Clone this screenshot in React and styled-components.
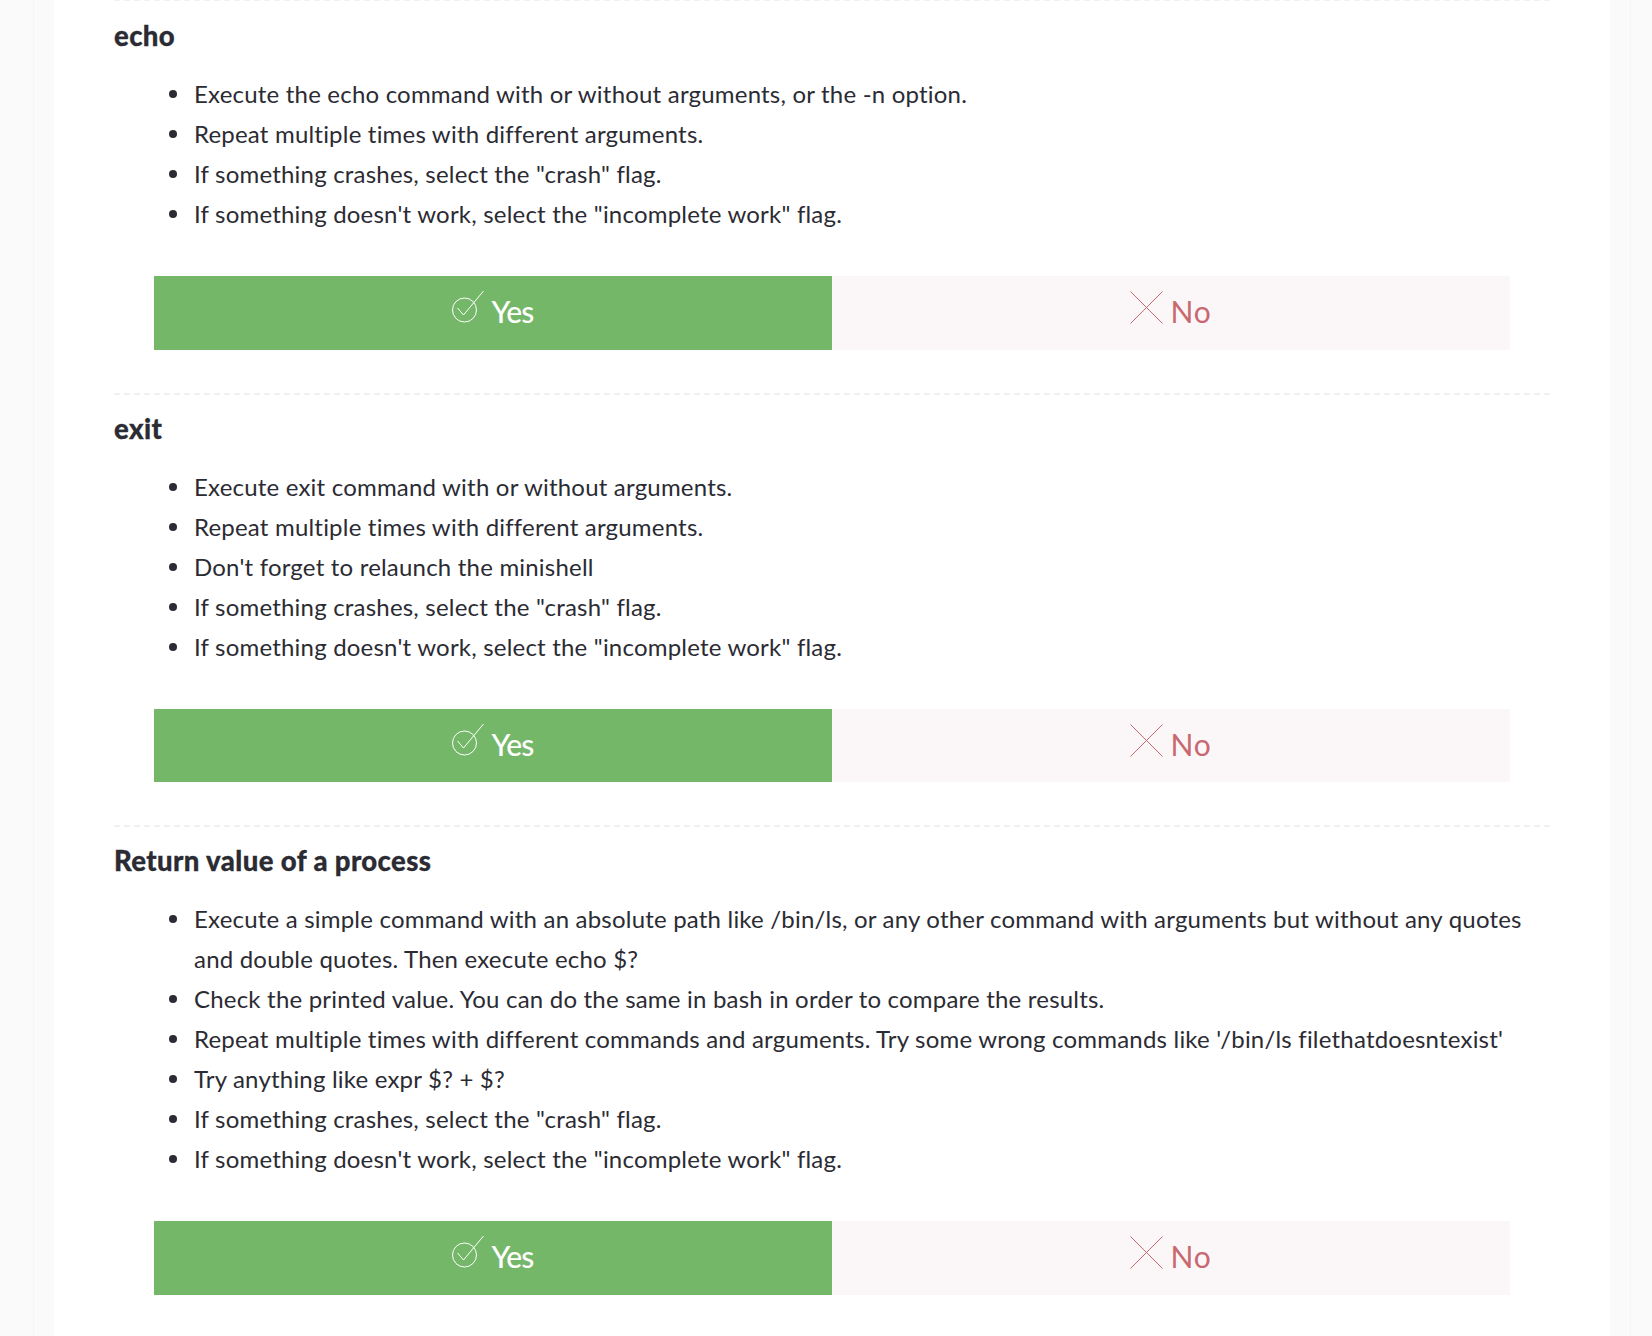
import React from "react";
import styled, { createGlobalStyle } from "styled-components";

const Global = createGlobalStyle`
  html, body { margin: 0; padding: 0; background: #fafafa; height: 1336px; overflow: hidden; }
  body { font-family: "Lato", "Liberation Sans", sans-serif; color: #2b2b33; }
`;

const Shell = styled.div`
  width: 1598px;
  margin-left: 33px;
  border-left: 1px solid #f5f5f5;
  border-right: 1px solid #f5f5f5;
  box-sizing: border-box;
  height: 1336px;
  padding: 0 20px;
`;

const Sheet = styled.main`
  background: #fff;
  padding: 0 60px;
  height: 1336px;
  display: flow-root;
  overflow: hidden;
`;

const Section = styled.section`
  border-top: 2px dashed #f1f1f1;
  padding-bottom: 43px;
  &:first-child { margin-top: -1px; padding-top: 1px; }
`;

const Title = styled.h2`
  margin: 0;
  height: 72px;
  box-sizing: border-box;
  padding-top: 17px;
  font-size: 27.5px;
  line-height: 34px;
  font-weight: 900;
  letter-spacing: 0.4px;
  -webkit-text-stroke: 0.3px #2b2b33;
`;

const Items = styled.ul`
  margin: 0 0 42px;
  padding: 0 0 0 40px;
  list-style: none;
`;

const Item = styled.li`
  display: grid;
  grid-template-columns: 40px 1fr;
  font-size: 24px;
  line-height: 40px;
  letter-spacing: 0.2px;
  &::before {
    content: "";
    width: 8px;
    height: 8px;
    margin: 16px 0 0 15px;
    border-radius: 50%;
    background: #2b2b33;
  }
`;

const Choice = styled.div`
  display: grid;
  grid-template-columns: 1fr 1fr;
  margin: 0 40px;
  height: 73.5px;
`;

const Btn = styled.div`
  display: flex;
  align-items: flex-start;
  justify-content: center;
  background: ${(p) => (p.$yes ? "#75b768" : "#fbf7f9")};
  color: ${(p) => (p.$yes ? "#fff" : "#c9686f")};
  font-size: 30px;
  font-weight: ${(p) => (p.$yes ? 500 : 400)};
  letter-spacing: ${(p) => (p.$yes ? "-0.8px" : "0.8px")};
  line-height: 40px;
  gap: 7px;
  padding-top: 15px;
`;

const Glyph = styled.svg`
  fill: none;
  stroke: currentColor;
  stroke-width: 1;
  display: block;
`;

const CheckIcon = () => (
  <Glyph width="32" height="33" viewBox="0 0 32 33">
    <circle cx="12.5" cy="19" r="12" />
    <path d="M5.5 17l6 7L31.5 0" />
  </Glyph>
);

const CrossIcon = () => (
  <Glyph width="33" height="33" viewBox="0 0 33 33">
    <path d="M0.5 0.5l32 32M32.5 0.5l-32 32" />
  </Glyph>
);

const sections = [
  { title: "echo", items: [
    "Execute the echo command with or without arguments, or the -n option.",
    "Repeat multiple times with different arguments.",
    'If something crashes, select the "crash" flag.',
    'If something doesn\'t work, select the "incomplete work" flag.',
  ]},
  { title: "exit", items: [
    "Execute exit command with or without arguments.",
    "Repeat multiple times with different arguments.",
    "Don't forget to relaunch the minishell",
    'If something crashes, select the "crash" flag.',
    'If something doesn\'t work, select the "incomplete work" flag.',
  ]},
  { title: "Return value of a process", items: [
    "Execute a simple command with an absolute path like /bin/ls, or any other command with arguments but without any quotes and double quotes. Then execute echo $?",
    "Check the printed value. You can do the same in bash in order to compare the results.",
    "Repeat multiple times with different commands and arguments. Try some wrong commands like '/bin/ls filethatdoesntexist'",
    "Try anything like expr $? + $?",
    'If something crashes, select the "crash" flag.',
    'If something doesn\'t work, select the "incomplete work" flag.',
  ]},
];

export default function App() {
  return (
    <>
      <Global />
      <Shell>
        <Sheet>
          {sections.map((s) => (
            <Section key={s.title}>
              <Title>{s.title}</Title>
              <Items>
                {s.items.map((t) => <Item key={t}><span>{t}</span></Item>)}
              </Items>
              <Choice>
                <Btn $yes><CheckIcon /><span>Yes</span></Btn>
                <Btn><CrossIcon /><span>No</span></Btn>
              </Choice>
            </Section>
          ))}
        </Sheet>
      </Shell>
    </>
  );
}
